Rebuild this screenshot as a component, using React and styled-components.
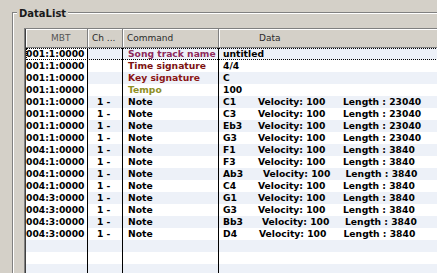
import React from "react";
import styled, { createGlobalStyle } from "styled-components";

const Global = createGlobalStyle`
  html, body { margin: 0; padding: 0; background: #d4d0c8; }
  body { font-family: "DejaVu Sans", Verdana, sans-serif; }
`;

const Screen = styled.div`
  width: 437px;
  height: 273px;
  overflow: hidden;
  background: #d4d0c8;
  display: flex;
  flex-direction: column;
`;

const Group = styled.div`
  position: relative;
  margin: 12px 0 0 12px;
  width: 480px;
  flex: 1;
  display: flex;
  flex-direction: column;
  border-top: 1px solid #808080;
  border-left: 1px solid #808080;
  box-shadow: inset 1px 1px 0 #ffffff;
  padding: 15px 0 0 11px;
`;

const Legend = styled.div`
  position: absolute;
  top: -5px;
  left: 4px;
  padding: 0 2px;
  background: #d4d0c8;
  font-family: "DejaVu Sans", Verdana, sans-serif;
  font-weight: bold;
  font-size: 10px;
  line-height: 12px;
  color: #1a1a1a;
`;

const Table = styled.div`
  flex: 1;
  display: flex;
  flex-direction: column;
  border-top: 1px solid #808080;
  border-left: 1px solid #808080;
`;

const Inner = styled.div`
  flex: 1;
  display: flex;
  flex-direction: column;
  border-left: 1px solid #404040;
  background: #ffffff;
`;

const COLS = "62px 35px 96px 1fr";

const HeaderRow = styled.div`
  display: grid;
  grid-template-columns: ${COLS};
  border-bottom: 1px solid #808080;
  background: #d4d0c8;
`;

const HeaderCell = styled.div`
  height: 18px;
  box-sizing: border-box;
  padding-left: ${(p) => p.$pad}px;
  padding-top: 1px;
  border-right: ${(p) => (p.$last ? "none" : "1px solid #808080")};
  box-shadow: inset 1px 1px 0 #ffffff;
  font-family: "DejaVu Sans", Verdana, sans-serif;
  font-size: 9px;
  line-height: 17px;
  color: ${(p) => p.$color || "#2a2a2a"};
  white-space: nowrap;
  overflow: hidden;
`;

const Row = styled.div`
  display: grid;
  grid-template-columns: ${COLS};
  height: 12px;
  background: ${(p) => (p.$alt ? "#edf1f8" : "#ffffff")};
  outline: ${(p) => (p.$focus ? "1px dotted #000" : "none")};
  outline-offset: -1px;
`;

const Cell = styled.div`
  box-sizing: border-box;
  padding-left: ${(p) => p.$pad || 0}px;
  border-right: ${(p) => (p.$last ? "none" : "1px solid #000")};
  background: ${(p) => p.$bg || "transparent"};
  font-family: "DejaVu Sans", Verdana, sans-serif;
  font-weight: bold;
  font-size: 9.2px;
  line-height: 12px;
  color: ${(p) => p.$color || "#000"};
  white-space: pre;
  overflow: hidden;
`;

const Field = styled.span`
  display: inline-block;
  width: ${(p) => p.$w}px;
`;

const CMD_COLORS = {
  "Song track name": "#8e2a5c",
  "Time signature": "#7c1212",
  "Key signature": "#8a1616",
  Tempo: "#8f8f24",
  Note: "#000000",
};

const meta = [
  ["001:1:0000", "", "Song track name", "untitled"],
  ["001:1:0000", "", "Time signature", "4/4"],
  ["001:1:0000", "", "Key signature", "C"],
  ["001:1:0000", "", "Tempo", "100"],
];

const notes = [
  ["001:1:0000", "C1", "23040", 0],
  ["001:1:0000", "C3", "23040", 0],
  ["001:1:0000", "Eb3", "23040", 0],
  ["001:1:0000", "G3", "23040", 0],
  ["004:1:0000", "F1", "3840", 0],
  ["004:1:0000", "F3", "3840", 0],
  ["004:1:0000", "Ab3", "3840", 5],
  ["004:1:0000", "C4", "3840", 0],
  ["004:3:0000", "G1", "3840", 0],
  ["004:3:0000", "G3", "3840", 0],
  ["004:3:0000", "Bb3", "3840", 4],
  ["004:3:0000", "D4", "3840", 1],
];

const rows = [
  ...meta.map(([mbt, ch, cmd, data]) => ({ mbt, ch, cmd, data })),
  ...notes.map(([mbt, name, len, shift]) => ({
    mbt,
    ch: "1 -",
    cmd: "Note",
    note: { name, len, shift },
  })),
];

function DataContent({ row }) {
  if (!row.note) return row.data;
  const { name, len, shift } = row.note;
  return (
    <>
      <Field $w={35 + shift}>{name}</Field>
      <Field $w={85 - shift / 2}>Velocity: 100</Field>
      <span>Length : {len}</span>
    </>
  );
}

export default function App() {
  const empties = [0, 1, 2, 3];
  return (
    <Screen>
      <Global />
      <Group>
        <Legend>DataList</Legend>
        <Table>
          <Inner>
            <HeaderRow>
              <HeaderCell $pad={25} $color="#555">MBT</HeaderCell>
              <HeaderCell $pad={4}>Ch ...</HeaderCell>
              <HeaderCell $pad={4}>Command</HeaderCell>
              <HeaderCell $pad={40} $last>Data</HeaderCell>
            </HeaderRow>
            {rows.map((r, i) => (
              <Row key={i} $alt={i % 2 === 0} $focus={i === 0}>
                <Cell $bg="#ffffff">{r.mbt}</Cell>
                <Cell $pad={9}>{r.ch}</Cell>
                <Cell $pad={5} $color={CMD_COLORS[r.cmd]}>{r.cmd}</Cell>
                <Cell $pad={4} $last>
                  <DataContent row={r} />
                </Cell>
              </Row>
            ))}
            {empties.map((k) => (
              <Row key={"e" + k} $alt={(rows.length + k) % 2 === 0}>
                <Cell />
                <Cell />
                <Cell />
                <Cell $last />
              </Row>
            ))}
          </Inner>
        </Table>
      </Group>
    </Screen>
  );
}
